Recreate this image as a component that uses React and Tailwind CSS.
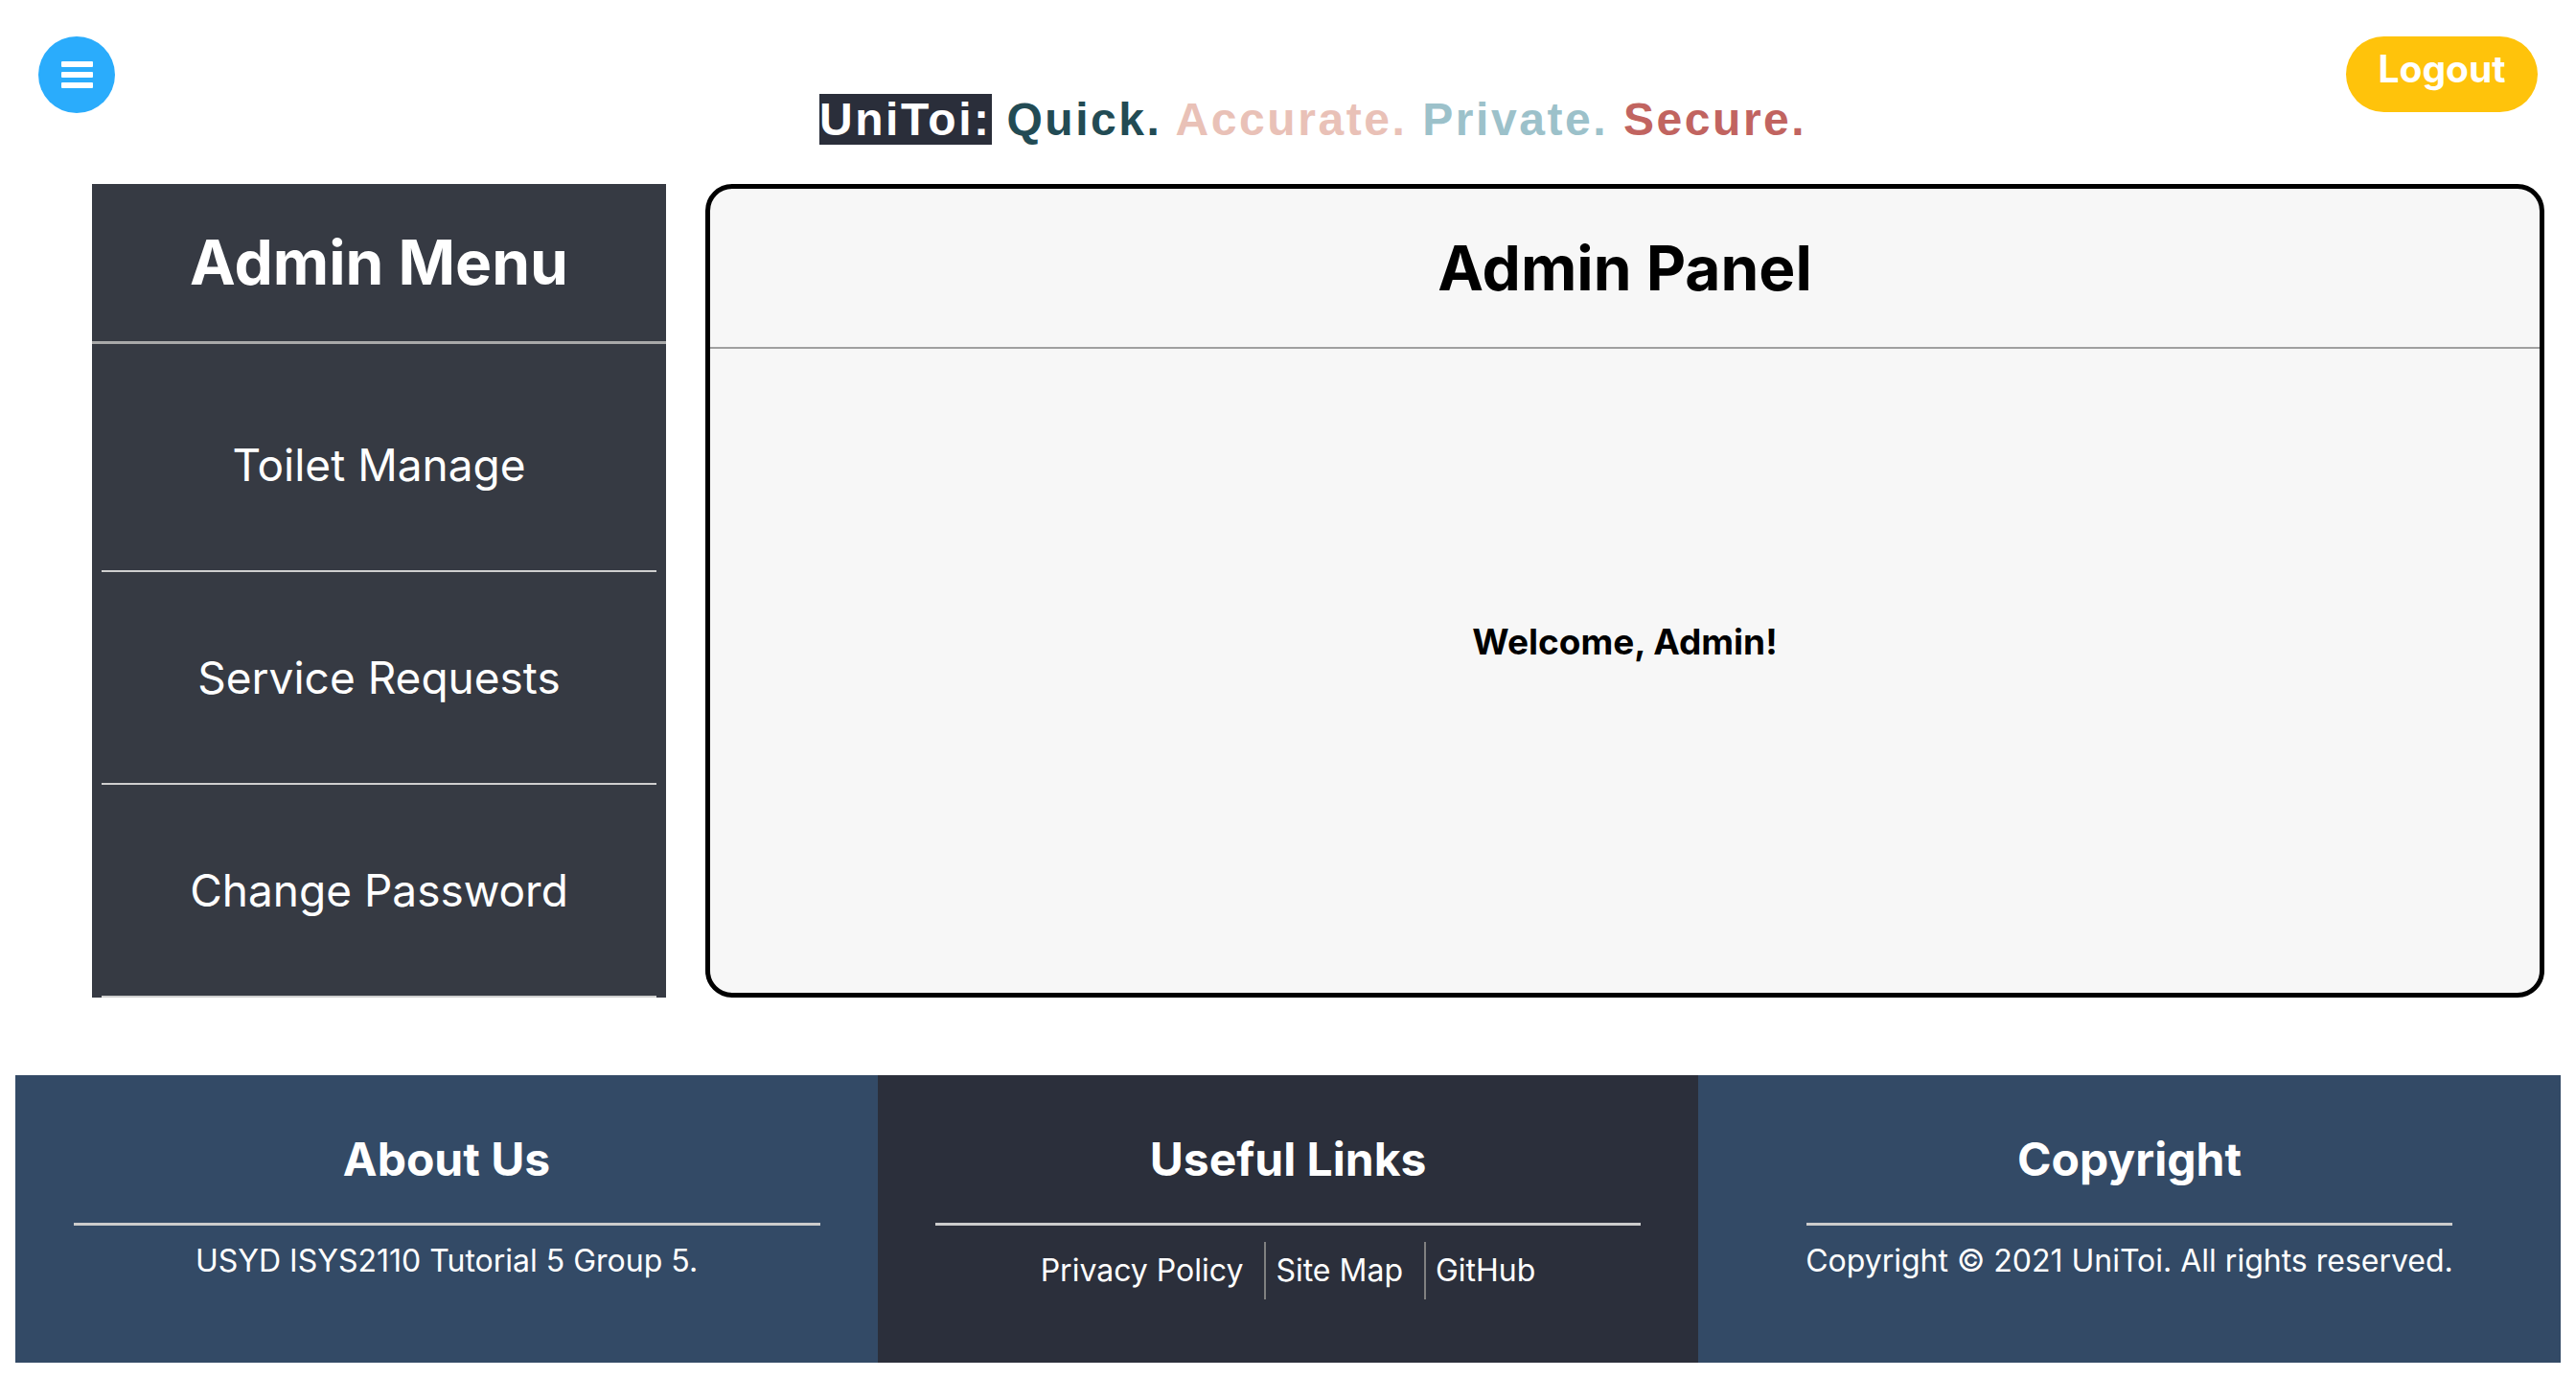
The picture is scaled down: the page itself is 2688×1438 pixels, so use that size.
export default function App() {
  return (
    <div className="w-[2688px] min-h-[1438px] bg-white font-['Inter',sans-serif] flex flex-col">
      <header className="flex items-start px-[40px] pt-[38px] h-[192px]">
        <button className="w-[80px] h-[80px] rounded-full bg-[#2aacfc] flex items-center justify-center shrink-0">
          <svg width="33" height="28" viewBox="0 0 33 28">
            <rect x="0" y="0" width="33" height="6" rx="1" fill="#ffffff" />
            <rect x="0" y="11" width="33" height="6" rx="1" fill="#ffffff" />
            <rect x="0" y="22" width="33" height="6" rx="1" fill="#ffffff" />
          </svg>
        </button>
        <div className="ml-[735px] mt-[60px] font-['Liberation_Sans',Arial,sans-serif] font-bold text-[48px] leading-[53px] tracking-[2.55px] whitespace-nowrap">
          <span className="bg-[#2a2e3a] text-white">UniToi:</span>{" "}
          <span className="text-[#224b54]">Quick.</span>{" "}
          <span className="text-[#e9c1b7]">Accurate.</span>{" "}
          <span className="text-[#9cc1ca]">Private.</span>{" "}
          <span className="text-[#c16460]">Secure.</span>
        </div>
        <div className="flex-1" />
        <button className="w-[200px] h-[79px] shrink-0 rounded-full bg-[#ffc30b] text-white font-bold text-[39px] leading-[48px] pb-[12px] flex items-center justify-center">
          Logout
        </button>
      </header>

      <main className="flex items-start pl-[96px] pr-[33px] gap-[41px]">
        <aside className="w-[599px] shrink-0 bg-[#363a43] flex flex-col">
          <div className="h-[167px] border-b-[3px] border-[#a9a9a9] flex items-center justify-center text-white font-bold text-[64px]">
            Admin Menu
          </div>
          <div className="pt-[16px] flex flex-col">
            {["Toilet Manage", "Service Requests", "Change Password"].map((t) => (
              <div
                key={t}
                className="mx-[10px] h-[222px] border-b-2 border-[#cfcfcf] flex items-center justify-center text-white text-[46px]"
              >
                {t}
              </div>
            ))}
          </div>
        </aside>

        <section className="flex-1 h-[849px] border-[5px] border-black rounded-[28px] bg-[#f7f7f7] flex flex-col overflow-hidden">
          <div className="h-[167px] shrink-0 border-b-2 border-[#a0a0a0] flex items-center justify-center font-bold text-[64px] text-black">
            Admin Panel
          </div>
          <div className="pt-[278px] text-center font-bold text-[37px] text-black">
            Welcome, Admin!
          </div>
        </section>
      </main>

      <footer className="mx-[16px] mt-[81px] mb-[16px] h-[300px] flex text-white">
        <div className="w-[900px] bg-[#334a66] flex flex-col items-center pt-[59px]">
          <h2 className="text-[48px] font-bold leading-[58px]">About Us</h2>
          <div className="w-[779px] border-t-[3px] border-[#cccccc] mt-[37px]" />
          <p className="mt-[18px] text-[32px] leading-[37px]">USYD ISYS2110 Tutorial 5 Group 5.</p>
        </div>
        <div className="w-[856px] bg-[#2b2f3b] flex flex-col items-center pt-[59px]">
          <h2 className="text-[48px] font-bold leading-[58px]">Useful Links</h2>
          <div className="w-[736px] border-t-[3px] border-[#cccccc] mt-[37px]" />
          <div className="mt-[17px] flex items-center text-[32px]">
            <span className="h-[60px] flex items-center pr-[22px]">Privacy Policy</span>
            <span className="h-[60px] flex items-center border-l-2 border-[#808080] pl-[10px] pr-[22px]">Site Map</span>
            <span className="h-[60px] flex items-center border-l-2 border-[#808080] pl-[10px]">GitHub</span>
          </div>
        </div>
        <div className="w-[900px] bg-[#334a66] flex flex-col items-center pt-[59px]">
          <h2 className="text-[48px] font-bold leading-[58px]">Copyright</h2>
          <div className="w-[674px] border-t-[3px] border-[#cccccc] mt-[37px]" />
          <p className="mt-[18px] text-[32px] leading-[37px]">Copyright © 2021 UniToi. All rights reserved.</p>
        </div>
      </footer>
    </div>
  );
}
